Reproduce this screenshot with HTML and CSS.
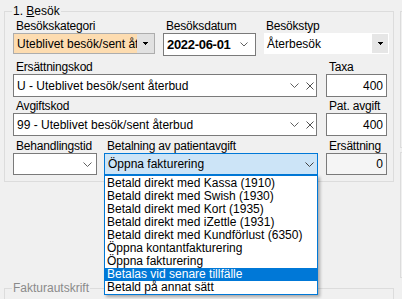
FILE: index.html
```html
<!DOCTYPE html>
<html>
<head>
<meta charset="utf-8">
<link rel="stylesheet" href="styles.css">
</head>
<body>
<div class="page">
  <div class="leftcol">
    <section class="group main">
      <div class="legend">1. <u>B</u>esök</div>

      <div class="row r1">
        <div class="fld w-kat">
          <div class="lbl">Besökskategori</div>
          <div class="combo orange">
            <span class="val">Uteblivet besök/sent återbud</span>
            <span class="btn"><svg width="5" height="3" viewBox="0 0 5 3"><path d="M0 0h5v1h-1v1h-1v1h-1v-1h-1v-1h-1z" fill="#000"/></svg></span>
          </div>
        </div>
        <div class="fld w-dat">
          <div class="lbl">Besöksdatum</div>
          <div class="box date">
            <span class="val">2022-06-01</span>
            <svg class="chev" width="8" height="5" viewBox="0 0 8 5"><path d="M0.5 0.5L4 4L7.5 0.5" fill="none" stroke="#606060"/></svg>
          </div>
        </div>
        <div class="fld w-typ">
          <div class="lbl">Besökstyp</div>
          <div class="combo plain">
            <span class="val">Återbesök</span>
            <span class="btn"><svg width="5" height="3" viewBox="0 0 5 3"><path d="M0 0h5v1h-1v1h-1v1h-1v-1h-1v-1h-1z" fill="#000"/></svg></span>
          </div>
        </div>
      </div>

      <div class="row r2">
        <div class="fld w-kod">
          <div class="lbl">Ersättningskod</div>
          <div class="box kod">
            <span class="val">U - Uteblivet besök/sent återbud</span>
            <svg class="chev" width="9" height="5" viewBox="0 0 9 5"><path d="M0.5 0.5L4.5 4.5L8.5 0.5" fill="none" stroke="#606060"/></svg>
            <svg class="clr" width="8" height="8" viewBox="0 0 8 8"><path d="M0.5 0.5L7.5 7.5M7.5 0.5L0.5 7.5" fill="none" stroke="#505050"/></svg>
          </div>
        </div>
        <div class="fld w-num">
          <div class="lbl">Taxa</div>
          <div class="box num"><span class="val">400</span></div>
        </div>
      </div>

      <div class="row r3">
        <div class="fld w-kod">
          <div class="lbl">Avgiftskod</div>
          <div class="box kod">
            <span class="val">99 - Uteblivet besök/sent återbud</span>
            <svg class="chev" width="9" height="5" viewBox="0 0 9 5"><path d="M0.5 0.5L4.5 4.5L8.5 0.5" fill="none" stroke="#606060"/></svg>
            <svg class="clr" width="8" height="8" viewBox="0 0 8 8"><path d="M0.5 0.5L7.5 7.5M7.5 0.5L0.5 7.5" fill="none" stroke="#505050"/></svg>
          </div>
        </div>
        <div class="fld w-num">
          <div class="lbl">Pat. avgift</div>
          <div class="box num"><span class="val">400</span></div>
        </div>
      </div>

      <div class="row r4">
        <div class="fld w-beh">
          <div class="lbl">Behandlingstid</div>
          <div class="box short beh">
            <span class="val"></span>
            <svg class="chev" width="9" height="5" viewBox="0 0 9 5"><path d="M0.5 0.5L4.5 4.5L8.5 0.5" fill="none" stroke="#606060"/></svg>
          </div>
        </div>
        <div class="fld w-bet">
          <div class="lbl">Betalning av patientavgift</div>
          <div class="box short focus">
            <span class="val">Öppna fakturering</span>
            <svg class="chev" width="9" height="5" viewBox="0 0 9 5"><path d="M0.5 0.5L4.5 4.5L8.5 0.5" fill="none" stroke="#404040"/></svg>
          </div>
          <ul class="list">
            <li class="item">Betald direkt med Kassa (1910)</li>
            <li class="item">Betald direkt med Swish (1930)</li>
            <li class="item">Betald direkt med Kort (1935)</li>
            <li class="item">Betald direkt med iZettle (1931)</li>
            <li class="item">Betald direkt med Kundförlust (6350)</li>
            <li class="item">Öppna kontantfakturering</li>
            <li class="item">Öppna fakturering</li>
            <li class="item sel">Betalas vid senare tillfälle</li>
            <li class="item">Betald på annat sätt</li>
          </ul>
        </div>
        <div class="fld w-num">
          <div class="lbl">Ersättning</div>
          <div class="box short num ro"><span class="val">0</span></div>
        </div>
      </div>
    </section>

    <section class="group faktura">
      <div class="legend muted">Fakturautskrift</div>
    </section>
  </div>

  <div class="rightcol">
    <section class="group side-a"></section>
    <section class="group side-b"></section>
  </div>
</div>
</body>
</html>
```

FILE: styles.css
```css
* { box-sizing: border-box; }

html, body {
  margin: 0;
  padding: 0;
}

body {
  width: 402px;
  height: 299px;
  overflow: hidden;
  background: #f0f0f0;
  color: #000;
  font-family: "Liberation Sans", Arial, sans-serif;
  font-size: 12px;
  letter-spacing: 0;
}

.page {
  display: flex;
  padding: 11px 0 0 4px;
  height: 299px;
}

.leftcol {
  flex: none;
  width: 390px;
  display: flex;
  flex-direction: column;
}

.rightcol {
  flex: none;
  width: 30px;
  margin-left: 6px;
  display: flex;
  flex-direction: column;
}

.group {
  position: relative;
  border: 1px solid #dcdcdc;
  flex: none;
}

.main {
  height: 171px;
  padding: 7px 0 0 8px;
}

.faktura {
  margin-top: 106px;
  height: 60px;
}

.side-a { height: 137px; }
.side-b { height: 126px; margin-top: 4px; }

.legend {
  position: absolute;
  top: -8px;
  left: 7px;
  padding: 0 1px;
  line-height: 14px;
  background: #f0f0f0;
  white-space: nowrap;
}

.legend u { text-decoration-thickness: 1px; text-underline-offset: 1px; }

.legend.muted { color: #8a8a8a; }

.row { display: flex; }
.r1 { gap: 8px; }
.r2 { gap: 9px; margin-top: 4px; }
.r3 { gap: 9px; margin-top: 2px; }
.r4 { gap: 7px; margin-top: 3px; }
.r4 .w-bet { margin-right: 1px; }

.fld {
  flex: none;
  display: flex;
  flex-direction: column;
  position: relative;
}

.w-kat { width: 142px; }
.w-dat { width: 93px; }
.w-typ { width: 125px; }
.w-kod { width: 304px; }
.w-num { width: 61px; }
.w-beh { width: 84px; }
.w-bet { width: 214px; }

.lbl {
  height: 14px;
  line-height: 14px;
  padding-left: 3px;
  white-space: nowrap;
  letter-spacing: -0.2px;
}

.w-typ .lbl { padding-left: 2px; }

.val {
  flex: 1;
  min-width: 0;
  overflow: hidden;
  white-space: nowrap;
}

.box {
  height: 23px;
  border: 1px solid #7a7a7a;
  background: #fff;
  display: flex;
  align-items: center;
  padding: 0 3px;
}

.box.short { height: 22px; }

.date { padding-right: 7px; }
.date .val {
  font-weight: bold;
  font-size: 13px;
  letter-spacing: -0.3px;
}

.kod { padding-right: 2px; }
.kod .chev { margin-right: 7px; }

.beh { padding-right: 4px; }

.num .val { text-align: right; }
.ro { background: #f5f5f5; }

.focus {
  background: #cce4f7;
  border-color: #0078d7;
}

.combo {
  height: 21px;
  display: flex;
  align-items: stretch;
}

.combo .val {
  display: flex;
  align-items: center;
}

.combo .btn {
  flex: none;
  display: flex;
  align-items: center;
  justify-content: center;
}

.orange { border: 1px solid #adadad; }
.orange .val {
  background: #fddcb0;
  padding-left: 3px;
}
.orange .btn {
  width: 17px;
  background: #e1e1e1;
}

.plain {
  background: #fff;
  padding: 1px;
}
.plain .val { padding-left: 2px; }
.plain .btn {
  width: 16px;
  background: #e6e6e6;
}

.list {
  position: absolute;
  top: 36px;
  left: 0;
  width: 214px;
  margin: 0;
  padding: 1px 0 0;
  list-style: none;
  background: #fff;
  border: 1px solid #0078d7;
  box-shadow: 2px 2px 3px rgba(0, 0, 0, 0.3);
  z-index: 5;
}

.item {
  height: 13px;
  line-height: 13px;
  padding-left: 2px;
  white-space: nowrap;
}

.item.sel {
  background: #0078d7;
  color: #fff;
}
```
